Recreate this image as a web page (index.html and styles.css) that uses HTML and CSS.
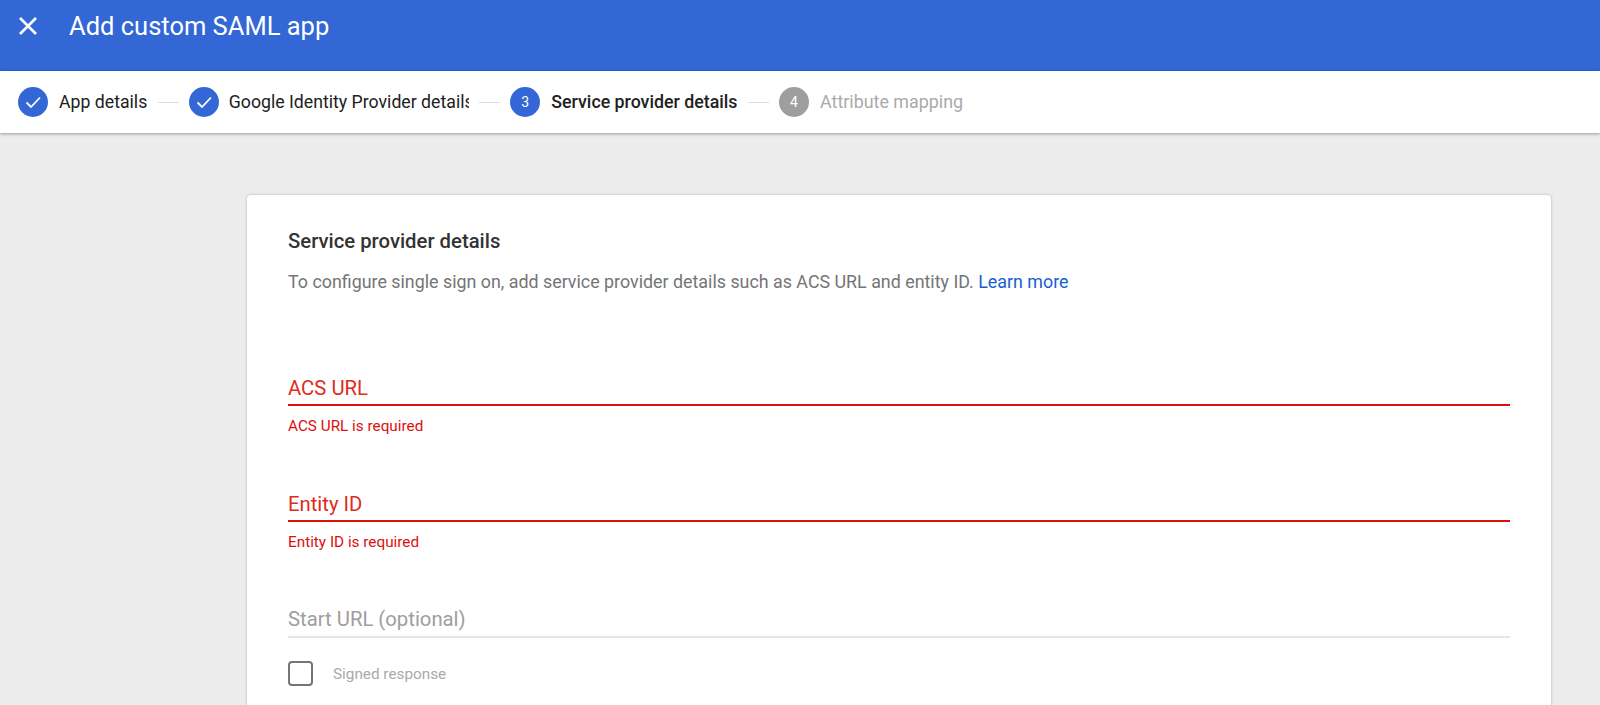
FILE: index.html
```html
<!DOCTYPE html>
<html lang="en">
<head>
<meta charset="utf-8">
<title>Add custom SAML app</title>
<link rel="stylesheet" href="styles.css">
</head>
<body>
<header class="topbar">
  <svg class="close" viewBox="0 0 20 20" width="20" height="20"><path d="M2 2L18 18M18 2L2 18" fill="none" stroke="#fff" stroke-width="2.6"/></svg>
  <h1 class="title">Add custom SAML app</h1>
</header>
<nav class="steps">
  <div class="step">
    <span class="dot dot-blue"><svg viewBox="0 0 30 30" width="30" height="30"><path d="M8.5 15.5L13 20L22 10.5" fill="none" stroke="#fff" stroke-width="1.8"/></svg></span>
    <span class="label">App details</span>
  </div>
  <span class="rule"></span>
  <div class="step">
    <span class="dot dot-blue"><svg viewBox="0 0 30 30" width="30" height="30"><path d="M8.5 15.5L13 20L22 10.5" fill="none" stroke="#fff" stroke-width="1.8"/></svg></span>
    <span class="label label-clip">Google Identity Provider details</span>
  </div>
  <span class="rule"></span>
  <div class="step">
    <span class="dot dot-blue">3</span>
    <span class="label label-active">Service provider details</span>
  </div>
  <span class="rule"></span>
  <div class="step">
    <span class="dot dot-grey">4</span>
    <span class="label label-off">Attribute mapping</span>
  </div>
</nav>
<main class="content">
  <section class="card">
    <h2 class="card-title">Service provider details</h2>
    <p class="card-desc">To configure single sign on, add service provider details such as ACS URL and entity ID. <a class="link" href="#">Learn more</a></p>
    <div class="field field-error field-first">
      <div class="field-label">ACS URL</div>
      <div class="field-msg">ACS URL is required</div>
    </div>
    <div class="field field-error">
      <div class="field-label">Entity ID</div>
      <div class="field-msg">Entity ID is required</div>
    </div>
    <div class="field field-plain">
      <div class="field-label">Start URL (optional)</div>
    </div>
    <div class="check-row">
      <span class="checkbox"></span>
      <span class="check-label">Signed response</span>
    </div>
  </section>
</main>
</body>
</html>
```
FILE: styles.css
```css
* { box-sizing: border-box; }
html, body { margin: 0; height: 705px; overflow: hidden; }
body { background: #ececec; font-family: Roboto, "Liberation Sans", sans-serif; }

.topbar {
  height: 71px;
  background: #3367d6;
  border-bottom: 1px solid #1a6ae0;
  display: flex;
  align-items: flex-start;
  padding: 16px 0 0 18px;
}
.close { flex: none; }
.title { margin: -6px 0 0 31px; font-size: 25.5px; font-weight: 400; line-height: 32px; color: #fff; }

.steps {
  height: 62px;
  background: #fff;
  display: flex;
  align-items: center;
  padding-left: 18px;
  box-shadow: 0 1px 3px rgba(0,0,0,.35);
  position: relative;
}
.step { display: flex; align-items: center; }
.dot {
  width: 30px; height: 30px; border-radius: 50%;
  display: flex; align-items: center; justify-content: center;
  color: #fff; font-size: 14px; flex: none;
}
.dot-blue { background: #3367d6; }
.dot-grey { background: #9e9e9e; }
.label { margin-left: 11px; font-size: 17.7px; line-height: 20px; color: #212121; white-space: nowrap; }
.label-clip { width: 240px; overflow: hidden; margin-left: 10px; }
.label-active { font-size: 17.8px; font-weight: 500; color: #212121; }
.label-off { font-size: 17.9px; color: #aaa; }
.rule { width: 21px; height: 1px; background: #ddd; margin: 0 10.25px; flex: none; }

.content { padding: 62px 49px 0 247px; }
.card {
  background: #fff;
  border-radius: 4px;
  box-shadow: 0 0 3px rgba(0,0,0,.22), 0 1px 2px rgba(0,0,0,.08);
  height: 560px;
  padding: 34px 41px 0;
}
.card-title { margin: 0; font-size: 20.3px; font-weight: 500; line-height: 24px; color: #333; }
.card-desc { margin: 17px 0 0; font-size: 17.85px; line-height: 24px; color: #757575; }
.link { color: #1a5fd0; text-decoration: none; }

.field { margin-top: 54px; }
.field-first { margin-top: 79px; }
.field-label { font-size: 20.3px; line-height: 30px; padding-bottom: 1px; }
.field-error .field-label { color: #e02b20; border-bottom: 2px solid #dc0f0f; }
.field-plain .field-label { color: #9e9e9e; line-height: 29px; padding-bottom: 2px; border-bottom: 2px solid #e6e6e6; }
.field-msg { margin-top: 11px; font-size: 15.3px; line-height: 18px; color: #dc0f0f; }

.check-row { display: flex; align-items: center; margin-top: 23px; }
.checkbox { width: 25px; height: 25px; border: 2.5px solid #757575; border-radius: 4px; flex: none; }
.check-label { margin-left: 20px; font-size: 15.3px; color: #aaa; }
```
